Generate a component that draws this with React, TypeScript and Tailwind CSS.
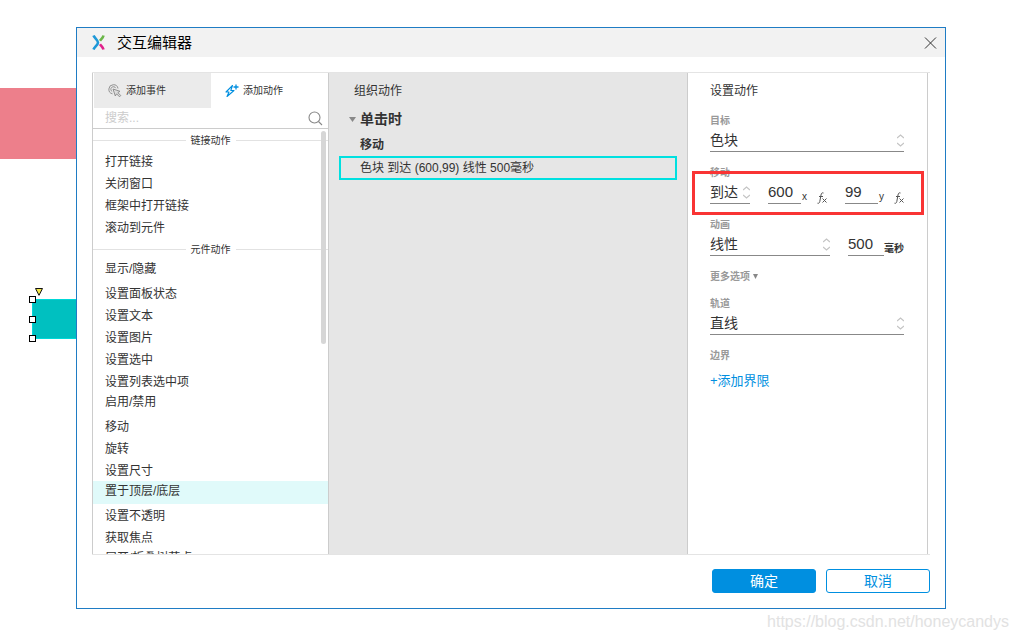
import type { ReactNode } from "react";

const linkActions = ["打开链接", "关闭窗口", "框架中打开链接", "滚动到元件"];

const widgetActions = [
  "显示/隐藏",
  "设置面板状态",
  "设置文本",
  "设置图片",
  "设置选中",
  "设置列表选中项",
  "启用/禁用",
  "移动",
  "旋转",
  "设置尺寸",
  "置于顶层/底层",
  "设置不透明",
  "获取焦点",
  "展开/折叠树节点",
];

const Logo = () => (
  <svg className="h-[15px] w-[13px]" viewBox="0 0 13 15" fill="none" strokeWidth="2.6">
    <path d="M1.500 0.500 C2.500 3 6 5 6 7.500 C6 10 2.500 12 1.500 14.500" stroke="#1e98d8" />
    <path d="M11.500 0.500 C11 3 9.500 3.800 8 5.800" stroke="#6ab648" />
    <path d="M11.500 14.500 C11 12 9.500 11.200 8 9.200" stroke="#e0218a" />
  </svg>
);

const TargetIcon = () => (
  <svg className="h-[14px] w-[14px]" viewBox="0 0 14 14" fill="none" stroke="#888" strokeWidth="0.900">
    <path d="M4.500 9.800 A4.600 4.600 0 1 1 10 4.500" />
    <path d="M4.200 7.600 A2.600 2.600 0 1 1 7.800 4.200" />
    <path d="M5 5 L7.300 12 L8.600 9.800 L11.500 12.800 L12.800 11.500 L9.800 8.600 L12 7.300 Z" fill="#ddd" />
  </svg>
);

const BoltIcon = () => (
  <svg className="h-[14px] w-[14px]" viewBox="0 0 14 14" fill="none" stroke="#008fe0" strokeWidth="1.100">
    <path d="M7.500 1.500 L1 8 H4 L2 12.500 L9 6.500 H5.800 Z" strokeLinejoin="round" />
    <path d="M11 0.500 V5.500 M8.500 3 H13.500" strokeWidth="1.300" />
  </svg>
);

const SearchIcon = () => (
  <svg className="h-[15px] w-[15px]" viewBox="0 0 15 15" fill="none" stroke="#888" strokeWidth="1.100">
    <circle cx="6.500" cy="6.500" r="5.500" />
    <path d="M10.500 10.500 L14 14" />
  </svg>
);

const FxIcon = () => (
  <svg className="h-[12px] w-[10px]" viewBox="0 0 10 12" fill="none" stroke="#555">
    <path d="M6.500 1 C5 0.300 4.300 1.500 4 3 L2.800 9.500 C2.500 11 1.500 11.700 0.500 11.200 M2 4.500 H6" />
    <path d="M5.500 6.500 L9.500 10.500 M9.500 6.500 L5.500 10.500" />
  </svg>
);

const Field = ({ id, label, children }: { id: string; label: string; children: ReactNode }) => (
  <div className="mb-[10px]">
    <label htmlFor={id} className="block h-5 text-[10px] leading-[22px] font-bold text-[#999]">
      {label}
    </label>
    <div className="flex gap-[18px]">{children}</div>
  </div>
);

const Picker = ({ id, value }: { id: string; value: string }) => (
  <div className="relative h-[22px] min-w-0 flex-1 border-b border-[#888]">
    <select id={id} className="block h-[20px] w-full appearance-none text-[14px] leading-[20px] outline-none">
      <option>{value}</option>
    </select>
    <svg
      className="pointer-events-none absolute top-1 right-0 h-[13px] w-[7px]"
      viewBox="0 0 7 13"
      fill="none"
      stroke="#c4c4c4"
      strokeWidth="1.300"
    >
      <path d="M0 4 L3.500 1 L7 4 M0 9 L3.500 12 L7 9" />
    </svg>
  </div>
);

const Coordinate = ({ axis, value }: { axis: string; value: string }) => (
  <div className="flex h-[22px] w-[59px] items-end">
    <input
      id={`move-${axis}`}
      defaultValue={value}
      className="h-[22px] w-[33px] border-b border-[#888] text-[15px] outline-none"
    />
    <label htmlFor={`move-${axis}`} className="ml-px text-[10px] leading-[14px]">
      {axis}
    </label>
    <button aria-label={`fx ${axis}`} className="ml-auto">
      <FxIcon />
    </button>
  </div>
);

const SectionTitle = ({ children }: { children: ReactNode }) => (
  <h3 className="flex h-[21px] items-center gap-[5px] pt-[2px] text-[10px] leading-[21px]">
    <span className="h-px flex-1 bg-[#e2e2e2]" />
    {children}
    <span className="h-px flex-1 bg-[#e2e2e2]" />
  </h3>
);

const ActionList = ({ items }: { items: string[] }) => (
  <ul>
    {items.map((item) => (
      <li key={item} className={item === "置于顶层/底层" ? "bg-[#e0fafa]" : ""}>
        <button
          className={`block w-full pl-3 text-left text-[12px] ${
            item.includes("/") ? "h-[23px] pb-[3px] leading-[18px]" : "h-[22px] leading-[24px]"
          }`}
        >
          {item}
        </button>
      </li>
    ))}
  </ul>
);

const Canvas = () => (
  <div className="absolute inset-0">
    <div className="absolute top-[88px] left-0 h-[71px] w-24 bg-[#ed7f8b]" />
    <div className="absolute top-[299px] left-8 h-10 w-20 border border-[#00d8d8] bg-[#00c0c0]" />
    <span className="absolute top-[296px] left-[29px] size-[7px] border border-black bg-white" />
    <span className="absolute top-[316px] left-[29px] size-[7px] border border-black bg-white" />
    <span className="absolute top-[335px] left-[29px] size-[7px] border border-black bg-white" />
    <svg className="absolute top-[288px] left-[35px] h-[8px] w-[8px]" viewBox="0 0 8 8">
      <path d="M0.500 0.500 H7.500 L4 7.300 Z" fill="#f5e94a" stroke="#111" />
    </svg>
  </div>
);

const App = () => (
  <div className="relative min-h-screen overflow-hidden bg-white pt-[27px] pr-[72px] pb-[31px] pl-[76px] font-['Liberation_Sans','Noto_Sans_CJK_SC',sans-serif] text-[#333]">
    <Canvas />

    <main className="relative border border-[#1f7cc4] bg-white">
      <header className="flex h-[29px] items-center bg-[#f2f2f2] pr-2 pl-[15px]">
        <Logo />
        <h1 className="ml-3 text-[15px] leading-[29px] text-black">交互编辑器</h1>
        <button aria-label="关闭" className="ml-auto">
          <svg className="h-[12px] w-[13px]" viewBox="0 0 12 12" stroke="#333">
            <path d="M0.500 0.500 L11.500 11.500 M11.500 0.500 L0.500 11.500" />
          </svg>
        </button>
      </header>

      <div className="px-[15px] pt-[15px] pb-[15px]">
        <div className="grid grid-cols-[237px_1fr_241px] border-y border-[#e4e4e4] pr-[2px]">
          <section className="min-w-0 border-x border-[#ccc]">
            <div className="grid h-[35px] grid-cols-2 pl-px text-[10px]">
              <button className="flex items-center gap-1 bg-[#ebebeb] pl-[14px]">
                <TargetIcon />
                添加事件
              </button>
              <button className="flex items-center gap-1 pl-[14px]">
                <BoltIcon />
                添加动作
              </button>
            </div>
            <div className="flex h-[21px] items-center border-b border-[#ccc] pr-[5px] pl-3">
              <input
                aria-label="搜索"
                placeholder="搜索..."
                className="h-5 min-w-0 flex-1 text-[12px] outline-none placeholder:text-[#ccc]"
              />
              <SearchIcon />
            </div>
            <div className="relative h-[425px] overflow-hidden">
              <SectionTitle>链接动作</SectionTitle>
              <ActionList items={linkActions} />
              <SectionTitle>元件动作</SectionTitle>
              <ActionList items={widgetActions} />
              <span className="absolute top-[2px] right-[2px] h-[213px] w-[5px] rounded-full bg-[#d6d6d6]" />
            </div>
          </section>

          <section className="bg-[#e6e6e6] px-[10px]">
            <h2 className="h-[35px] pl-[15px] text-[12px] leading-[37px]">组织动作</h2>
            <h3 className="flex h-[22px] items-center gap-1 pl-[10px] text-[14px] leading-[22px] font-bold">
              <svg className="h-[5px] w-[7px]" viewBox="0 0 7 5" fill="#888">
                <path d="M0 0 H7 L3.500 5 Z" />
              </svg>
              单击时
            </h3>
            <h4 className="h-[26px] pl-[21px] text-[12px] leading-[30px] font-bold">移动</h4>
            <button className="block h-6 w-full border-2 border-[#00e0e0] pl-[19px] text-left text-[12px] leading-[18px]">
              色块 到达 (600,99) 线性 500毫秒
            </button>
          </section>

          <section className="relative border-x border-[#ccc] pr-[23px] pl-[22px]">
            <h2 className="h-[37px] text-[12px] leading-[37px]">设置动作</h2>
            <Field id="target" label="目标">
              <Picker id="target" value="色块" />
            </Field>
            <Field id="move" label="移动">
              <Picker id="move" value="到达" />
              <Coordinate axis="x" value="600" />
              <Coordinate axis="y" value="99" />
            </Field>
            <Field id="animation" label="动画">
              <Picker id="animation" value="线性" />
              <div className="flex h-[22px] items-end">
                <input
                  id="duration"
                  defaultValue="500"
                  className="h-[22px] w-9 border-b border-[#888] text-[15px] outline-none"
                />
                <label htmlFor="duration" className="text-[10px] leading-[14px] font-bold">
                  毫秒
                </label>
              </div>
            </Field>
            <button className="mb-[7px] flex h-5 items-center gap-[3px] text-[10px] font-bold text-[#999]">
              更多选项
              <svg className="h-[5px] w-[5px]" viewBox="0 0 5 5" fill="#888">
                <path d="M0 0 H5 L2.500 5 Z" />
              </svg>
            </button>
            <Field id="track" label="轨道">
              <Picker id="track" value="直线" />
            </Field>
            <h3 className="mb-[5px] h-5 text-[10px] leading-[22px] font-bold text-[#999]">边界</h3>
            <button className="block h-5 text-[13px] leading-[22px] text-[#008fe0]">+添加界限</button>
            <div className="pointer-events-none absolute top-[98px] right-[3px] left-[4px] h-[44px] border-3 border-[#f93434]" />
          </section>
        </div>

        <footer className="mt-[14px] flex justify-end gap-[10px] text-[14px] leading-[22px]">
          <button className="h-6 w-[104px] rounded-[3px] border border-[#008fe0] bg-[#008fe0] text-white">确定</button>
          <button className="h-6 w-[104px] rounded-[3px] border border-[#008fe0] bg-white text-[#008fe0]">取消</button>
        </footer>
      </div>
    </main>

    <p className="absolute right-[9px] bottom-[6px] text-[16px] leading-6 text-[#e2e2e2]">
      https://blog.csdn.net/honeycandys
    </p>
  </div>
);

export default App;
